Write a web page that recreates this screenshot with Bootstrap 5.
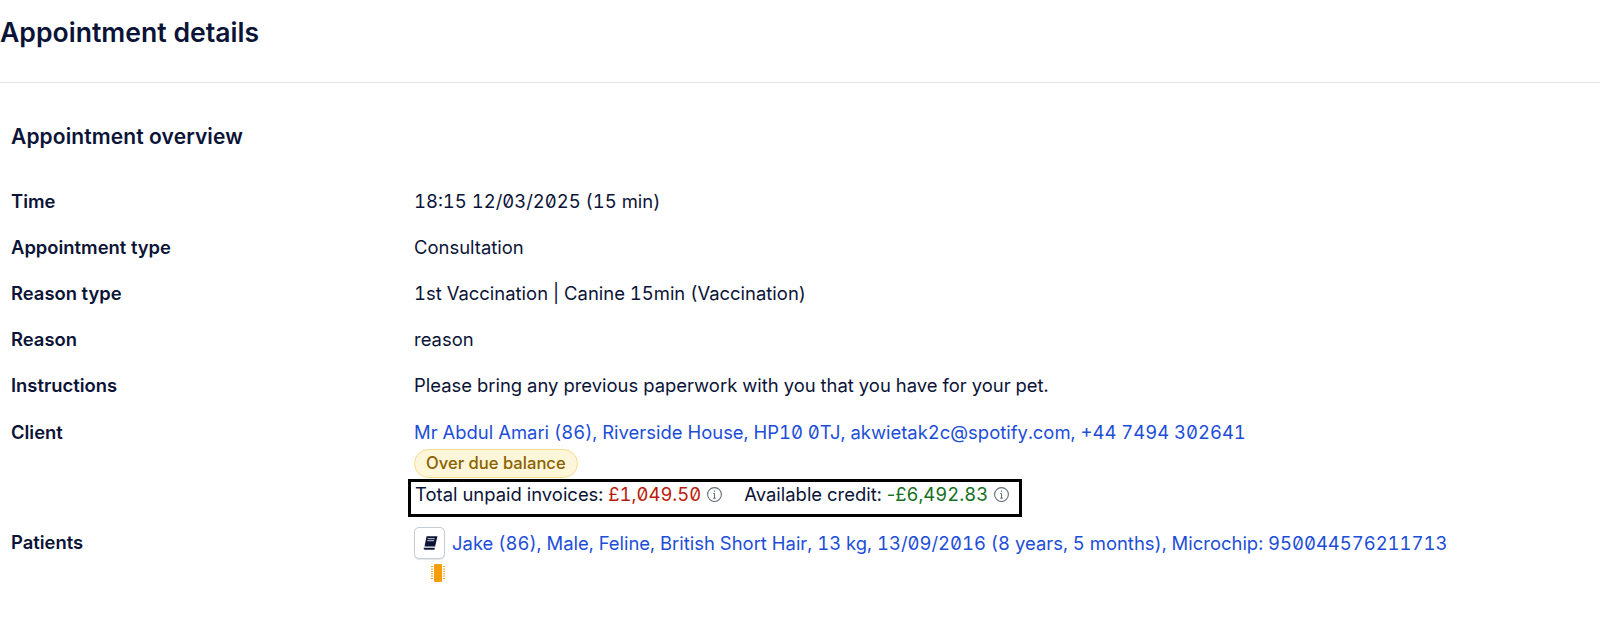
<!DOCTYPE html>
<html lang="en"><head><meta charset="utf-8">
<link href="https://cdn.jsdelivr.net/npm/bootstrap@5.3.0/dist/css/bootstrap.min.css" rel="stylesheet">
<style>
body{font-family:Inter,"Liberation Sans",sans-serif;color:#0b1437;font-size:18.46px;background:#fff}
.pg-head{height:83px;border-bottom:1px solid #e2e4e8;padding-top:15px}
.pg-head h1{font-size:26.6px;font-weight:600;line-height:34px;margin:0;color:#0b1437}
.pg-body{padding:40px 11px 0}
.pg-body h2{font-size:21px;font-weight:600;letter-spacing:.1px;line-height:28px;margin:0 0 38px;color:#0b1437}
.lbl{width:403px;flex:none;font-weight:600;line-height:24px;font-size:18.4px}
.val{line-height:24px;font-feature-settings:"tnum","zero";font-variant-numeric:tabular-nums slashed-zero}
.rowi{margin-bottom:22px}
.rowc{margin-bottom:10px}
.lblc{padding-top:1px}
.lblp{padding-top:3px}
.plain{font-feature-settings:normal;font-variant-numeric:normal}
.lnk{color:#1d4ed8;text-decoration:none}
.due{display:inline-block;background:#fef6d8;border:1px solid #f5dc8e;color:#8a6100;border-radius:15px;font-size:16.6px;font-weight:500;padding:0 11px;line-height:27px;margin-top:5px}
.hl{border:3px solid #000;display:inline-flex;align-items:center;gap:5px;height:38px;padding:0 9px 9px 4px;margin:1px 0 0 -6px}
.hl svg{position:relative;top:1px}
.red{color:#b91c0c}.grn{color:#15701f}
.book{width:31px;height:32px;flex:none;border:1px solid #c5ccd6;border-radius:5px;background:#fff;display:inline-flex;align-items:center;justify-content:center;box-shadow:0 1px 1px rgba(0,0,0,.1)}
.chip{display:block;margin:5px 0 0 17px}
</style></head><body>
<div class="pg-head"><h1>Appointment details</h1></div>
<div class="pg-body">
<h2>Appointment overview</h2>
<div class="d-flex rowi"><div class="lbl">Time</div><div class="val">18:15 12/03/2025 (15 min)</div></div>
<div class="d-flex rowi"><div class="lbl">Appointment type</div><div class="val">Consultation</div></div>
<div class="d-flex rowi"><div class="lbl">Reason type</div><div class="val">1st Vaccination | Canine 15min (Vaccination)</div></div>
<div class="d-flex rowi"><div class="lbl">Reason</div><div class="val">reason</div></div>
<div class="d-flex rowi"><div class="lbl">Instructions</div><div class="val">Please bring any previous paperwork with you that you have for your pet.</div></div>
<div class="d-flex rowc"><div class="lbl lblc">Client</div><div class="val lblc">
<a class="lnk" href="#">Mr Abdul Amari (86), Riverside House, HP10 0TJ, akwietak2c@spotify.com, +44 7494 302641</a><br>
<span class="due plain">Over due balance</span><br>
<span class="hl">Total unpaid invoices: <span class="red">£1,049.50</span>
<svg width="17" height="17" viewBox="0 0 16 16" fill="none" stroke="#5f6b7a"><circle cx="8" cy="8" r="6.5"/><path d="M8 7v4.5M6.8 7H8M6.8 11.5h2.4M8 4.2v1.2"/></svg>
<span class="ms-3">Available credit:</span> <span class="grn"><span class="plain">-</span>£6,492.83</span>
<svg width="17" height="17" viewBox="0 0 16 16" fill="none" stroke="#5f6b7a"><circle cx="8" cy="8" r="6.5"/><path d="M8 7v4.5M6.8 7H8M6.8 11.5h2.4M8 4.2v1.2"/></svg></span>
</div></div>
<div class="d-flex"><div class="lbl lblp">Patients</div><div class="val">
<div class="d-flex align-items-center" style="gap:7px"><span class="book"><svg width="16" height="16" viewBox="0 0 14 14"><path d="M4 1h9.5l-2 9H2.2z" fill="#0b1437"/><path d="M1.6 11.2h9.6l-.3 1.8H2.6c-1 0-1.4-1-1-1.8z" fill="#0b1437"/><path d="M5 3.2h6M4.6 5h6" stroke="#fff" stroke-width=".7"/></svg></span><a class="lnk" href="#">Jake (86), Male, Feline, British Short Hair, 13 kg, 13/09/2016 (8 years, 5 months), Microchip: 950044576211713</a></div>
<svg class="chip" width="14" height="18" viewBox="0 0 14 18"><rect x="3" y="0" width="8" height="18" rx="1" fill="#f59e0b"/><path d="M1 2v14M13 2v14" stroke="#f59e0b" stroke-width="2" stroke-dasharray="1 1.4"/></svg>
</div></div>
</div>
</body></html>
